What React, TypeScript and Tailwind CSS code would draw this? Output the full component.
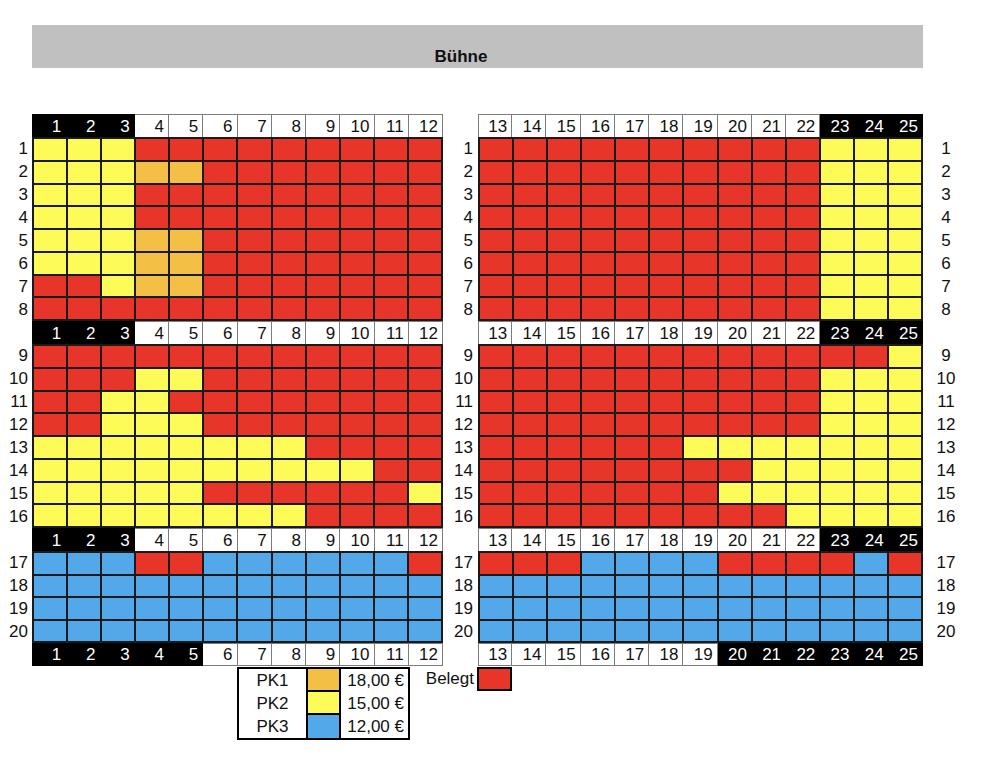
import React from "react";
import clsx from "clsx";

type Seat = "R" | "Y" | "O" | "B";

const seatColor: Record<Seat, string> = {
  R: "bg-[#e8352a]",
  Y: "bg-[#fdfb58]",
  O: "bg-[#f4bf45]",
  B: "bg-[#52a8e8]",
};

// Reihen 1–20, linke Seite (Plätze 1–12)
const leftRows = [
  "YYYRRRRRRRRR",
  "YYYOORRRRRRR",
  "YYYRRRRRRRRR",
  "YYYRRRRRRRRR",
  "YYYOORRRRRRR",
  "YYYOORRRRRRR",
  "RRYOORRRRRRR",
  "RRRRRRRRRRRR",
  "RRRRRRRRRRRR",
  "RRRYYRRRRRRR",
  "RRYYRRRRRRRR",
  "RRYYYRRRRRRR",
  "YYYYYYYYRRRR",
  "YYYYYYYYYYRR",
  "YYYYYRRRRRRY",
  "YYYYYYYYRRRR",
  "BBBRRBBBBBBR",
  "BBBBBBBBBBBB",
  "BBBBBBBBBBBB",
  "BBBBBBBBBBBB",
];

// Reihen 1–20, rechte Seite (Plätze 13–25)
const rightRows = [
  "RRRRRRRRRRYYY",
  "RRRRRRRRRRYYY",
  "RRRRRRRRRRYYY",
  "RRRRRRRRRRYYY",
  "RRRRRRRRRRYYY",
  "RRRRRRRRRRYYY",
  "RRRRRRRRRRYYY",
  "RRRRRRRRRRYYY",
  "RRRRRRRRRRRRY",
  "RRRRRRRRRRYYY",
  "RRRRRRRRRRYYY",
  "RRRRRRRRRRYYY",
  "RRRRRRYYYYYYY",
  "RRRRRRRRYYYYY",
  "RRRRRRRYYYYYY",
  "RRRRRRRRRYYYY",
  "RRRBBBBRRRRBR",
  "BBBBBBBBBBBBB",
  "BBBBBBBBBBBBB",
  "BBBBBBBBBBBBB",
];

const sections: [number, number][] = [
  [0, 8],
  [8, 16],
  [16, 20],
];

const Header = ({
  first,
  count,
  black,
  bottom,
  cols,
}: {
  first: number;
  count: number;
  black: (n: number) => boolean;
  bottom?: boolean;
  cols: string;
}) => (
  <div className={clsx("grid h-[23px]", cols)}>
    {Array.from({ length: count }, (_, i) => {
      const n = first + i;
      const dark = black(n);
      return (
        <div
          key={n}
          className={clsx(
            "flex items-center justify-end pr-[4px] border-t border-r",
            dark ? "bg-black text-white border-black" : "bg-white text-[#111] border-[#7c7c7c]",
            i === 0 && "border-l",
            bottom && "border-b"
          )}
        >
          {n}
        </div>
      );
    })}
  </div>
);

const Block = ({ rows, cols, height, rowsClass }: { rows: string[]; cols: string; height: string; rowsClass: string }) => (
  <div className={clsx("grid border-l-2 border-t-2 border-[#1a1a1a]", cols, rowsClass, height)}>
    {rows.map((r, ri) =>
      r.split("").map((s, ci) => (
        <div key={`${ri}-${ci}`} className={clsx("border-r-2 border-b-2 border-[#1a1a1a]", seatColor[s as Seat])} />
      ))
    )}
  </div>
);

const Side = ({
  rows,
  first,
  count,
  cols,
  width,
  topBlack,
  bottomBlack,
}: {
  rows: string[];
  first: number;
  count: number;
  cols: string;
  width: string;
  topBlack: (n: number) => boolean;
  bottomBlack: (n: number) => boolean;
}) => (
  <div className={clsx("flex flex-col", width)}>
    {sections.map(([a, b]) => (
      <React.Fragment key={a}>
        <Header first={first} count={count} black={topBlack} cols={cols} />
        <Block
          rows={rows.slice(a, b)}
          cols={cols}
          height={b - a === 8 ? "h-[184px]" : "h-[92px]"}
          rowsClass={b - a === 8 ? "grid-rows-8" : "grid-rows-4"}
        />
      </React.Fragment>
    ))}
    <Header first={first} count={count} black={bottomBlack} cols={cols} bottom />
  </div>
);

const Labels = ({ className, itemClass }: { className: string; itemClass: string }) => (
  <div className={clsx("flex flex-col", className)}>
    {sections.map(([a, b]) => (
      <React.Fragment key={a}>
        <div className="h-[23px]" />
        {Array.from({ length: b - a }, (_, i) => (
          <div key={i} className={clsx("h-[23px] flex items-center", itemClass)}>
            {a + i + 1}
          </div>
        ))}
      </React.Fragment>
    ))}
    <div className="h-[23px]" />
  </div>
);

const legend = [
  { label: "PK1", color: "bg-[#f4bf45]", price: "18,00 €" },
  { label: "PK2", color: "bg-[#fdfb58]", price: "15,00 €" },
  { label: "PK3", color: "bg-[#52a8e8]", price: "12,00 €" },
];

export default function App() {
  return (
    <div className="w-[983px] h-[763px] bg-white text-[#111] text-[17px] leading-none font-['Liberation_Sans',Arial,sans-serif] overflow-hidden">
      {/* Bühne */}
      <div className="ml-[32px] mt-[25px] w-[891px] h-[43px] bg-[#c0c0c0] flex items-end justify-center pr-[33px] pb-[3px]">
        <span className="text-[17px] font-bold">Bühne</span>
      </div>

      <div className="mt-[46px] flex">
        <Labels className="w-[32px]" itemClass="justify-end pr-[4px]" />
        <Side
          rows={leftRows}
          first={1}
          count={12}
          cols="grid-cols-12"
          width="w-[411px]"
          topBlack={(n) => n <= 3}
          bottomBlack={(n) => n <= 5}
        />
        <Labels className="w-[35px]" itemClass="justify-end pr-[5px]" />
        <Side
          rows={rightRows}
          first={13}
          count={13}
          cols="grid-cols-[repeat(13,minmax(0,1fr))]"
          width="w-[445px]"
          topBlack={(n) => n >= 23}
          bottomBlack={(n) => n >= 20}
        />
        <Labels className="w-[46px]" itemClass="justify-center" />
      </div>

      {/* Legende */}
      <div className="flex items-start pl-[237px] mt-px">
        <div className="w-[173px] border-2 border-black grid grid-cols-[67px_35px_1fr]">
          {legend.map((l, i) => (
            <React.Fragment key={l.label}>
              <div className="h-[23px] flex items-center justify-center">{l.label}</div>
              <div className={clsx("h-[23px] border-x-2 border-black", l.color, i < legend.length - 1 && "border-b-2")} />
              <div className="h-[23px] flex items-center justify-end pr-[4px]">{l.price}</div>
            </React.Fragment>
          ))}
        </div>
        <div className="w-[67px] h-[23px] flex items-center justify-end pr-[3px]">Belegt</div>
        <div className="w-[35px] h-[24px] border-2 border-black bg-[#e8352a]" />
      </div>
    </div>
  );
}
